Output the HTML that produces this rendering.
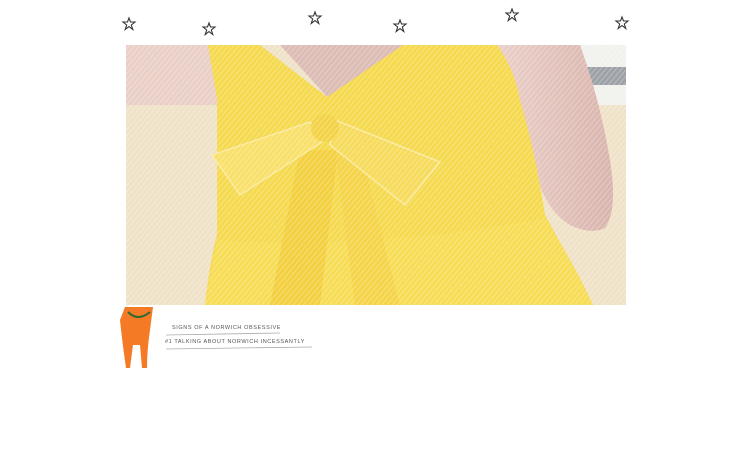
<!DOCTYPE html>
<html><head><style>
html,body{margin:0;padding:0;background:#fff;width:750px;height:464px;overflow:hidden;font-family:"Liberation Sans",sans-serif}
.t{position:absolute;font-size:5.5px;color:#555;letter-spacing:0.6px;font-family:"Liberation Sans",sans-serif;white-space:nowrap}
</style></head><body>
<svg width="750" height="464" style="position:absolute;left:0;top:0">
<defs>
<pattern id="st" width="4" height="4" patternUnits="userSpaceOnUse" patternTransform="rotate(-50)">
<rect width="4" height="0.8" fill="#fff" opacity="0.35"/></pattern>
<linearGradient id="sk" x1="0" x2="1"><stop offset="0" stop-color="#ead0c8"/><stop offset="1" stop-color="#d9b4ad"/></linearGradient>
<g id="star"><path d="M0,-6 L1.5,-2 L6,-2 L2.3,1 L3.8,5.5 L0,2.6 L-3.8,5.5 L-2.3,1 L-6,-2 L-1.5,-2 Z" fill="none" stroke="#333" stroke-width="1.1"/></g>
</defs>
<use href="#star" x="129" y="24"/><use href="#star" x="209" y="29"/><use href="#star" x="315" y="18"/>
<use href="#star" x="400" y="26"/><use href="#star" x="512" y="15"/><use href="#star" x="622" y="23"/>
<rect x="126" y="45" width="500" height="260" fill="#efe2c8"/>
<rect x="126" y="45" width="95" height="60" fill="#e9cfc6"/>
<rect x="575" y="45" width="51" height="60" fill="#f1f1ee"/>
<rect x="575" y="67" width="51" height="18" fill="#9da2a8"/>
<path d="M497,45 L580,45 Q600,100 610,160 Q618,210 605,228 Q590,235 570,225 Q545,210 535,170 Z" fill="url(#sk)"/>
<path d="M280,45 L420,45 L330,100 Z" fill="#dcbcb4"/>
<path d="M208,45 L260,45 L327,97 L403,45 L497,45 Q515,70 520,100 Q535,150 545,215 Q570,260 593,305 L205,305 Q210,260 217,235 L217,100 Z" fill="#f5d94f"/>
<path d="M217,240 Q380,250 545,218 Q575,265 593,305 L205,305 Z" fill="#f7dc55"/>
<path d="M300,150 L338,150 L320,305 L270,305 Z" fill="#f3d040"/>
<path d="M335,150 L360,150 L400,305 L355,305 Z" fill="#f5d44a"/>
<path d="M212,155 L310,122 L325,140 L240,195 Z" fill="#f8e06a" stroke="#fbeaa0" stroke-width="1.5"/>
<path d="M335,120 L440,162 L405,205 L330,145 Z" fill="#f6db5c" stroke="#fbeaa0" stroke-width="1.5"/>
<circle cx="325" cy="128" r="14" fill="#f4d247"/>
<rect x="126" y="45" width="500" height="260" fill="url(#st)"/>
<path d="M125,307 L153,307 L150,330 Q147,350 147,368 L142,368 L140,345 L133,345 L130,368 L126,368 Q122,340 120,320 Z" fill="#f47a25"/>
<path d="M128,312 Q138,322 150,312" fill="none" stroke="#2f6a35" stroke-width="2"/>
<line x1="166" y1="335" x2="280" y2="333" stroke="#aaa" stroke-width="0.8"/>
<line x1="166" y1="349" x2="312" y2="347" stroke="#aaa" stroke-width="0.8"/>
</svg>
<div class="t" style="left:172px;top:325px">SIGNS OF A NORWICH OBSESSIVE</div>
<div class="t" style="left:165px;top:339px">#1 TALKING ABOUT NORWICH INCESSANTLY</div>
</body></html>
